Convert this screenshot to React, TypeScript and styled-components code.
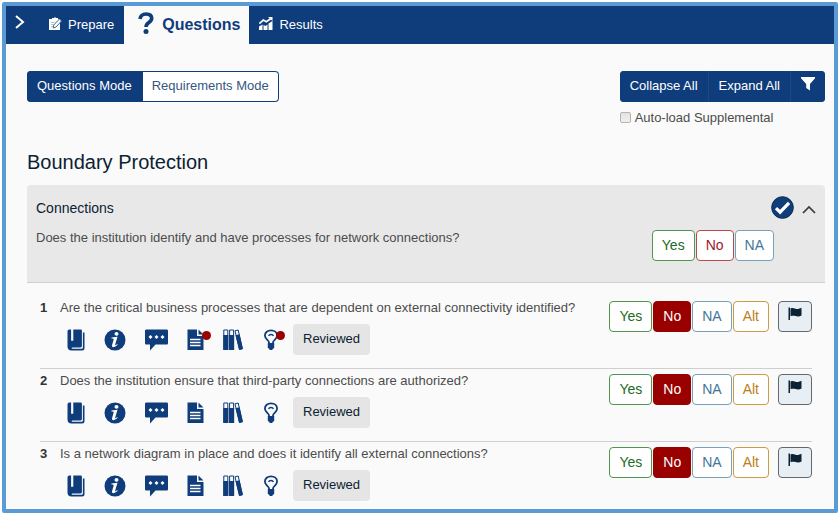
import React, { useState } from "react";
import styled, { createGlobalStyle, css } from "styled-components";

const navy = "#0f3c7b";
const ink = "#0b2233";

const GlobalStyle = createGlobalStyle`
  *, *::before, *::after { box-sizing: border-box; }
  body {
    margin: 0;
    background: #fff;
    font: 13px/20px "Liberation Sans", Arial, sans-serif;
    color: #4c4c4c;
  }
  button { font: inherit; cursor: pointer; }
  svg { display: block; flex: none; }
`;

const Frame = styled.div`
  display: flow-root;
  min-height: calc(100vh - 3px);
  margin: 2px 1px 1px 2px;
  border: 4px solid #5b9bd5;
  border-radius: 2px;
  background: #fafafa;
`;

const Page = styled.div`
  display: flow-root;
`;

const NavBar = styled.nav`
  display: flex;
  height: 38px;
  background: ${navy};
`;

const MenuToggle = styled.button`
  display: flex;
  align-items: center;
  width: 33px;
  padding: 0 0 6px 9px;
  border: 0;
  background: none;
  color: #fff;
`;

const Tab = styled.a<{ $active?: boolean }>`
  display: flex;
  align-items: center;
  gap: 6px;
  padding: 0 10px;
  color: #fff;
  text-decoration: none;
  ${(p) =>
    p.$active &&
    css`
      gap: 8px;
      padding: 0 9px 0 14px;
      background: #fafafa;
      color: ${navy};
      font-size: 16px;
      font-weight: bold;
    `}
`;

const Content = styled.main`
  padding: 27px 9px 0 21px;
`;

const Toolbar = styled.div`
  display: flex;
  justify-content: space-between;
  align-items: flex-start;
`;

const ButtonGroup = styled.div`
  display: flex;
  gap: 1px;
  border-radius: 4px;
  background: #1d477f;
  overflow: hidden;
`;

const GroupButton = styled.button<{ $solid?: boolean }>`
  display: flex;
  align-items: center;
  height: 31px;
  padding: 0 10px 2px;
  border: 0;
  background: ${(p) => (p.$solid ? navy : "#fff")};
  color: ${(p) => (p.$solid ? "#fff" : "#35577f")};
  ${(p) =>
    !p.$solid &&
    css`
      border-radius: 0 4px 4px 0;
      box-shadow: inset 0 0 0 1px ${navy};
    `}
`;

const FilterButton = styled(GroupButton)`
  padding-bottom: 5px;
`;

const ModeGroup = styled(ButtonGroup)`
  gap: 0;
`;

const Supplemental = styled.label`
  display: flex;
  align-items: center;
  gap: 4px;
  margin-top: 6px;
`;

const Checkbox = styled.input`
  appearance: none;
  width: 11px;
  height: 11px;
  margin: 0 0 2px;
  border: 1px solid #b4b4b4;
  border-radius: 2px;
  background: linear-gradient(#e2e2e2, #f0f0f0);
  &:checked { background: ${navy}; }
`;

const Title = styled.h1`
  margin: 22px 0 11px;
  font-size: 20px;
  line-height: 24px;
  font-weight: normal;
  color: ${ink};
`;

const Panel = styled.section`
  padding: 9px 9px 21px;
  border-bottom: 1px solid #cfcfcf;
  border-radius: 4px 4px 0 0;
  background: #e8e8e8;
`;

const PanelHeader = styled.header`
  display: flex;
  justify-content: space-between;
  align-items: flex-start;
`;

const PanelTitle = styled.h2`
  margin: 0;
  font-size: 14px;
  line-height: 28px;
  font-weight: normal;
  color: ${ink};
`;

const PanelActions = styled.div`
  display: flex;
  align-items: center;
  gap: 8px;
  padding-top: 2px;
`;

const IconButton = styled.button`
  position: relative;
  display: flex;
  padding: 0;
  border: 0;
  background: none;
  color: ${navy};
`;

const CollapseButton = styled(IconButton)`
  padding-top: 4px;
`;

const PanelBody = styled.div`
  display: flex;
  justify-content: space-between;
  align-items: flex-start;
  padding-right: 42px;
`;

const PanelText = styled.p`
  margin: 6px 0 0;
`;

const Answers = styled.div`
  display: flex;
  flex: none;
  gap: 1px;
  margin-top: 8px;
`;

const tones = {
  yes: { line: "#4f964f", text: "#1c6b24", fill: "#1c6b24" },
  no: { line: "#b84a4f", text: "#a0191f", fill: "#990000" },
  na: { line: "#78a0b8", text: "#447698", fill: "#447698" },
  alt: { line: "#c99c45", text: "#bb8019", fill: "#bb8019" },
};
type Tone = keyof typeof tones;

const AnswerButton = styled.button<{ $tone: Tone; $selected?: boolean }>`
  height: 31px;
  padding: 0 9px 2px;
  border: 1px solid ${(p) => (p.$selected ? tones[p.$tone].fill : tones[p.$tone].line)};
  border-radius: 4px;
  background: ${(p) => (p.$selected ? tones[p.$tone].fill : "#fff")};
  color: ${(p) => (p.$selected ? "#fff" : tones[p.$tone].text)};
  font-size: 14px;
`;

const FlagButton = styled.button`
  display: flex;
  justify-content: center;
  width: 34px;
  height: 31px;
  margin-left: 8px;
  padding: 5px 0 0;
  border: 1px solid #63686c;
  border-radius: 4px;
  background: #e8eff4;
  color: ${ink};
`;

const QuestionList = styled.ol`
  margin: 12px 13px 0;
  padding: 0;
  list-style: none;
`;

const QuestionRow = styled.li`
  display: flex;
  align-items: flex-start;
  justify-content: space-between;
  padding-bottom: 13px;
  & + & { border-top: 1px solid #cfcfcf; }
  &:first-child { padding-top: 1px; }
  &:last-child { padding-bottom: 8px; }
  ${Answers} { margin-top: 5px; }
`;

const QuestionText = styled.p`
  display: flex;
  margin: 2px 0 6px;
`;

const Number = styled.b`
  width: 20px;
  color: #333;
`;

const Tools = styled.div`
  display: flex;
  align-items: center;
  padding-left: 27px;
`;

const ToolButton = styled(IconButton)<{ $gap: "s" | "m" | "l" }>`
  margin-right: ${(p) => ({ s: 15, m: 19, l: 21 })[p.$gap]}px;
`;

const Badge = styled.span`
  position: absolute;
  top: 2px;
  right: -7px;
  width: 9px;
  height: 9px;
  border-radius: 50%;
  background: #990000;
`;

const Reviewed = styled.button`
  height: 31px;
  padding: 0 10px 1px;
  border: 0;
  border-radius: 4px;
  background: #e5e5e5;
  color: ${ink};
`;

const ChevronRight = () => (
  <svg width="10" height="14" viewBox="0 0 10 14" fill="none" stroke="currentColor" strokeWidth="2">
    <path d="M1 1l7 6-7 6" />
  </svg>
);

const ChevronUp = () => (
  <svg width="14" height="9" viewBox="0 0 14 9" fill="none" stroke="#3a3a3a" strokeWidth="1.7">
    <path d="M1 8l6-6 6 6" />
  </svg>
);

const PrepareIcon = () => (
  <svg width="13" height="16" viewBox="0 0 13 16">
    <path fill="#fff" d="M0 2h3V1h2l1-1 1 1h2v1h2v11H0z" />
    <path d="M2 5.500h3.500M2 7.500h2.500M2 9.500h2" stroke="#9db0cb" strokeWidth=".8" />
    <path d="M4.200 11l.6-3 5.600-6 2.200 1.900-5.500 6.100z" fill="#fff" stroke="#355a8d" strokeWidth=".9" />
  </svg>
);

const QuestionIcon = () => (
  <svg width="16" height="26" viewBox="0 0 16 26" fill="none">
    <path d="M2 7C2.500 4 4.700 2 8 2c3.500 0 5.700 1.500 5.700 4.300 0 4.500-5.700 4-5.700 8.700" stroke="currentColor" strokeWidth="3.600" />
    <circle cx="8" cy="19.400" r="2.500" fill="currentColor" />
  </svg>
);

const ResultsIcon = () => (
  <svg width="14" height="16" viewBox="0 0 14 16">
    <path fill="#fff" d="M0 9.500l3.500-2V13H0zM4.500 8l2 1 2-1.500V13h-4zM9.500 6.500L13.500 4v9h-4z" />
    <path d="M.3 6.500l4-3.500 3 1.800L12 1.500" fill="none" stroke="#fff" strokeWidth="1.700" />
    <path d="M9 0h4.500v4z" fill="#fff" />
  </svg>
);

const FilterIcon = () => (
  <svg width="14" height="14" viewBox="0 0 14 14" fill="currentColor">
    <path d="M0 0h14v1.200L9 7v6.500L5.200 11V7L0 1.200z" />
  </svg>
);

const CheckIcon = () => (
  <svg width="23" height="23" viewBox="0 0 24 24">
    <circle cx="12" cy="12" r="11.300" fill={navy} stroke="#0b2d4d" />
    <path d="M5.200 12.700l4.300 4.200 9.300-9.800" fill="none" stroke="#fff" strokeWidth="3.400" />
  </svg>
);

const BookmarkBookIcon = () => (
  <svg width="18" height="22" viewBox="0 0 18 22">
    <path fill="currentColor" d="M2.500.5h1.600V11.800h2.200V.5h7.200c.9 0 1.400.5 1.400 1.400V17c0 .9-.5 1.400-1.400 1.400H5.500c-1.200 0-1.200 1.300 0 1.300h9.300c.7 0 1.100-.4 1.100-1.100V3.500h1.600V19c0 1.700-.8 2.500-2.500 2.500H4.500C2 21.500.5 20 .5 17.500V3C.5 1.300 1 .5 2.500.5z" />
  </svg>
);

const InfoIcon = () => (
  <svg width="22" height="22" viewBox="0 0 22 22">
    <circle cx="11" cy="11" r="10.500" fill="currentColor" />
    <ellipse cx="12.500" cy="4.900" rx="2" ry="1.800" fill="#fff" />
    <path fill="#fff" d="M7.500 8.600l6-.9-2.300 7.700c-.3 1.300.5 1.300 1.900-.3l.6.500c-1.800 2.900-6.500 3.700-5.600.3l1.500-5.200c.2-1-.5-1.300-2.200-1.200z" />
  </svg>
);

const CommentIcon = () => (
  <svg width="23" height="22" viewBox="0 0 23 22">
    <path fill="currentColor" d="M1.500.5h20c1 0 1.500.5 1.500 1.500v12c0 1-.5 1.500-1.500 1.500h-11L5 21.500v-6H1.500C.5 15.500 0 15 0 14V2C0 1 .5.500 1.500.500z" />
    <path fill="#fff" d="M5.500 6l2 2-2 2-2-2zM11.500 6l2 2-2 2-2-2zM17.500 6l2 2-2 2-2-2z" />
  </svg>
);

const DocumentIcon = () => (
  <svg width="17" height="22" viewBox="0 0 17 22">
    <path fill="currentColor" d="M.5.500H10v6.500h6.500v14H.5zM11.500 .5l5 5h-5z" />
    <path d="M3 10.500h10.500M3 13.500h10.500M3 16.500h10.500" stroke="#fafafa" strokeWidth="1.400" />
  </svg>
);

const BooksIcon = () => (
  <svg width="20" height="22" viewBox="0 0 20 22" fill="none" stroke="currentColor">
    <path d="M.8 1h4v19.500h-4zM6.600 1h4v19.500h-4zM12 1.800l3.200-.8 4.200 18.700-3 .8z" />
    <path fill="currentColor" stroke="none" d="M.3 6h5v15h-5zM6.100 6h5v15h-5zM12.500 6.200l4-1L19.900 20l-3.600 1z" />
  </svg>
);

const BulbIcon = () => (
  <svg width="14" height="22" viewBox="0 0 14 22">
    <path d="M5 15v-1.500c0-2.500-4.100-3-4.100-6.900C.9 3.500 3.600 1.300 7 1.300s6.100 2.200 6.100 5.300c0 3.900-4.100 4.400-4.100 6.900V15z" fill="none" stroke="currentColor" strokeWidth="1.800" />
    <path d="M4.600 7C5.200 5 8.800 5 9.400 7" fill="none" stroke="currentColor" strokeWidth="1.300" />
    <path fill="currentColor" d="M3.800 14h6.400v5L8.500 20v1h-3v-1l-1.700-1z" />
  </svg>
);

const FlagIcon = () => (
  <svg width="14" height="14" viewBox="0 0 14 14" fill="currentColor">
    <path d="M.5.500H2V13H.5zM2.500 1.500c3-1.500 4.700.7 7 .5 1.200 0 2.400-.7 4-1.300V8.500c-5 2.500-6.500-1-11 .7z" />
  </svg>
);

const answers: { label: string; tone: Tone }[] = [
  { label: "Yes", tone: "yes" },
  { label: "No", tone: "no" },
  { label: "NA", tone: "na" },
  { label: "Alt", tone: "alt" },
];

const questions = [
  { text: "Are the critical business processes that are dependent on external connectivity identified?", marked: true },
  { text: "Does the institution ensure that third-party connections are authorized?", marked: false },
  { text: "Is a network diagram in place and does it identify all external connections?", marked: false },
];

function Question({ number, text, marked }: { number: number; text: string; marked: boolean }) {
  const [answer, setAnswer] = useState("No");
  return (
    <QuestionRow>
      <div>
        <QuestionText>
          <Number>{number}</Number>
          <span>{text}</span>
        </QuestionText>
        <Tools>
          <ToolButton $gap="m" aria-label="Guidance"><BookmarkBookIcon /></ToolButton>
          <ToolButton $gap="m" aria-label="Information"><InfoIcon /></ToolButton>
          <ToolButton $gap="m" aria-label="Comments"><CommentIcon /></ToolButton>
          <ToolButton $gap="m" aria-label="Documents"><DocumentIcon />{marked && <Badge />}</ToolButton>
          <ToolButton $gap="l" aria-label="References"><BooksIcon /></ToolButton>
          <ToolButton $gap="s" aria-label="Observations"><BulbIcon />{marked && <Badge />}</ToolButton>
          <Reviewed>Reviewed</Reviewed>
        </Tools>
      </div>
      <Answers>
        {answers.map((a) => (
          <AnswerButton key={a.label} $tone={a.tone} $selected={answer === a.label} onClick={() => setAnswer(a.label)}>
            {a.label}
          </AnswerButton>
        ))}
        <FlagButton aria-label="Flag for review"><FlagIcon /></FlagButton>
      </Answers>
    </QuestionRow>
  );
}

export default function App() {
  return (
    <Page>
      <GlobalStyle />
      <Frame>
        <NavBar>
          <MenuToggle aria-label="Open menu"><ChevronRight /></MenuToggle>
          <Tab href="#prepare"><PrepareIcon />Prepare</Tab>
          <Tab href="#questions" $active aria-current="page"><QuestionIcon />Questions</Tab>
          <Tab href="#results"><ResultsIcon />Results</Tab>
        </NavBar>
        <Content>
          <Toolbar>
            <ModeGroup>
              <GroupButton $solid>Questions Mode</GroupButton>
              <GroupButton>Requirements Mode</GroupButton>
            </ModeGroup>
            <div>
              <ButtonGroup>
                <GroupButton $solid>Collapse All</GroupButton>
                <GroupButton $solid>Expand All</GroupButton>
                <FilterButton $solid aria-label="Filter"><FilterIcon /></FilterButton>
              </ButtonGroup>
              <Supplemental>
                <Checkbox type="checkbox" />
                Auto-load Supplemental
              </Supplemental>
            </div>
          </Toolbar>
          <Title>Boundary Protection</Title>
          <Panel>
            <PanelHeader>
              <PanelTitle>Connections</PanelTitle>
              <PanelActions>
                <CheckIcon />
                <CollapseButton aria-label="Collapse section"><ChevronUp /></CollapseButton>
              </PanelActions>
            </PanelHeader>
            <PanelBody>
              <PanelText>Does the institution identify and have processes for network connections?</PanelText>
              <Answers>
                {answers.slice(0, 3).map((a) => (
                  <AnswerButton key={a.label} $tone={a.tone}>{a.label}</AnswerButton>
                ))}
              </Answers>
            </PanelBody>
          </Panel>
          <QuestionList>
            {questions.map((q, i) => (
              <Question key={q.text} number={i + 1} {...q} />
            ))}
          </QuestionList>
        </Content>
      </Frame>
    </Page>
  );
}
